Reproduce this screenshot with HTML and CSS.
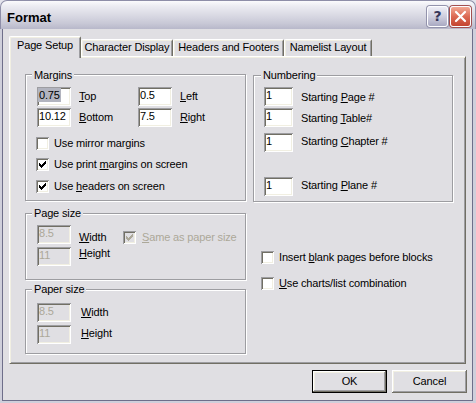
FILE: index.html
```html
<!DOCTYPE html>
<html>
<head>
<meta charset="utf-8">
<title>Format</title>
<link rel="stylesheet" href="styles.css">
</head>
<body>
<div class="window">
  <div class="titlebar">
    <span class="title">Format</span>
    <div class="caption-buttons">
      <span class="cbtn help">?</span>
      <span class="cbtn close"><svg width="13" height="13" viewBox="0 0 13 13"><path d="M2 2L11 11M11 2L2 11" stroke="#fff" stroke-width="2.2" stroke-linecap="round"/></svg></span>
    </div>
  </div>
  <div class="frame">
    <div class="client">
      <div class="tabs">
        <div class="tab active t1">Page Setup</div>
        <div class="tab t2">Character Display</div>
        <div class="tab t3">Headers and Footers</div>
        <div class="tab t4">Namelist Layout</div>
      </div>
      <div class="panel">
        <div class="col">
          <div class="group margins">
            <span class="legend">Margins</span>
            <div class="mgrid">
              <div class="field"><span class="sel">0.75</span></div>
              <div class="flabel"><u>T</u>op</div>
              <div class="field">0.5</div>
              <div class="flabel"><u>L</u>eft</div>
              <div class="field">10.12</div>
              <div class="flabel"><u>B</u>ottom</div>
              <div class="field">7.5</div>
              <div class="flabel"><u>R</u>ight</div>
            </div>
            <div class="check c1"><span class="box"></span><span>Use mirror margins</span></div>
            <div class="check c2"><span class="box"><svg class="tick" width="13" height="13" viewBox="0 0 13 13"><path d="M3.5 5v3M4.5 6v3M5.5 7v3M6.5 6v3M7.5 5v3M8.5 4v3M9.5 3v3" stroke="#000"/></svg></span><span>Use print <u>m</u>argins on screen</span></div>
            <div class="check c3"><span class="box"><svg class="tick" width="13" height="13" viewBox="0 0 13 13"><path d="M3.5 5v3M4.5 6v3M5.5 7v3M6.5 6v3M7.5 5v3M8.5 4v3M9.5 3v3" stroke="#000"/></svg></span><span>Use <u>h</u>eaders on screen</span></div>
          </div>

          <div class="group pagesize">
            <span class="legend">Page size</span>
            <div class="fields">
              <div class="field disabled">8.5</div>
              <div class="field disabled">11</div>
            </div>
            <div class="labels">
              <div><u>W</u>idth</div>
              <div><u>H</u>eight</div>
            </div>
            <div class="check same disabled"><span class="box"><svg class="tick" width="13" height="13" viewBox="0 0 13 13"><path d="M3.5 5v3M4.5 6v3M5.5 7v3M6.5 6v3M7.5 5v3M8.5 4v3M9.5 3v3" stroke="#aca899"/></svg></span><span><u>S</u>ame as paper size</span></div>
          </div>

          <div class="group papersize">
            <span class="legend">Paper size</span>
            <div class="fields">
              <div class="field disabled">8.5</div>
              <div class="field disabled">11</div>
            </div>
            <div class="labels">
              <div><u>W</u>idth</div>
              <div><u>H</u>eight</div>
            </div>
          </div>
        </div>

        <div class="col">
          <div class="group numbering">
            <span class="legend">Numbering</span>
            <div class="nrow n1"><div class="field">1</div><div class="nlabel">Starting <u>P</u>age #</div></div>
            <div class="nrow n2"><div class="field">1</div><div class="nlabel">Starting <u>T</u>able#</div></div>
            <div class="nrow n3"><div class="field">1</div><div class="nlabel">Starting <u>C</u>hapter #</div></div>
            <div class="nrow n4"><div class="field">1</div><div class="nlabel">Starting <u>P</u>lane #</div></div>
          </div>
          <div class="check r1"><span class="box"></span><span>Insert <u>b</u>lank pages before blocks</span></div>
          <div class="check r2"><span class="box"></span><span><u>U</u>se charts/list combination</span></div>
        </div>
      </div>
      <div class="buttons">
        <div class="btn default">OK</div>
        <div class="btn">Cancel</div>
      </div>
    </div>
  </div>
</div>
</body>
</html>
```
FILE: styles.css
```css
* { box-sizing: border-box; }
html, body { margin: 0; padding: 0; }
body {
  width: 476px;
  height: 403px;
  overflow: hidden;
  background: #e4e4ec;
  font-family: "Liberation Sans", Arial, sans-serif;
  font-size: 11px;
  letter-spacing: -0.15px;
  color: #000;
}
u { text-decoration: underline; text-underline-offset: 1px; }

.window {
  width: 476px;
  height: 403px;
  display: flex;
  flex-direction: column;
}

/* Title bar */
.titlebar {
  height: 29px;
  flex: none;
  display: flex;
  align-items: center;
  justify-content: space-between;
  padding: 0 4px 0 6px;
  border: 1px solid #8e8ea8;
  border-bottom: 0;
  border-radius: 7px 7px 0 0;
  background: linear-gradient(#fbfbfd 0%, #ececf2 18%, #dadae4 50%, #c8c8d6 80%, #b8b8ca 100%);
}
.title {
  font-weight: bold;
  font-size: 13px;
  letter-spacing: 0;
  padding-top: 4px;
}
.caption-buttons { display: flex; gap: 2px; margin-top: 2px; }
.cbtn {
  width: 21px;
  height: 21px;
  border-radius: 3px;
  display: flex;
  align-items: center;
  justify-content: center;
  border: 1px solid #fdfdff;
}
.help {
  background: linear-gradient(#eeeef6, #cbcbdc 55%, #a9a9c2);
  box-shadow: 0 0 0 1px #9393ac;
  font: bold 14px "DejaVu Sans", sans-serif;
  color: #36365a;
  letter-spacing: 0;
}
.close {
  background: linear-gradient(#f2a894, #dc6a54 50%, #c44430);
  box-shadow: 0 0 0 1px #a25050;
}

/* Frame and client area */
.frame {
  flex: 1;
  display: flex;
  padding: 0 3px 2px 2px;
  background: #cfcfdb;
}
.client {
  flex: 1;
  border: 1px solid #6e6e8a;
  border-top: 0;
  background: #e0dfe3;
}

/* Tabs */
.tabs {
  height: 27px;
  display: flex;
  align-items: flex-end;
  padding-left: 6px;
  position: relative;
  z-index: 1;
}
.tab {
  height: 17px;
  border: 1px solid;
  border-color: #fff #716f64 transparent #fff;
  border-bottom: 0;
  border-radius: 2px 2px 0 0;
  box-shadow: inset 1px 1px #f1efe2, inset -1px 0 #9d9da1;
  background: #e0dfe3;
  text-align: center;
  line-height: 13px;
  padding-top: 1px;
  white-space: nowrap;
}
.tab.active {
  height: 22px;
  margin-bottom: -2px;
  padding-top: 2px;
}
.t1 { width: 72px; }
.t2 { width: 92px; }
.t3 { width: 111px; }
.t4 { width: 88px; }

/* Panel */
.panel {
  width: 457px;
  height: 308px;
  margin-left: 6px;
  border: 1px solid;
  border-color: #fff #716f64 #716f64 #fff;
  box-shadow: inset 1px 1px #f1efe2, inset -1px -1px #9d9da1;
  padding: 17px 0 0 15px;
  display: grid;
  grid-template-columns: 221px 200px;
  column-gap: 7px;
  align-items: start;
}
.col { display: flex; flex-direction: column; }

/* Group boxes */
.group {
  position: relative;
  border: 1px solid #9d9da1;
  box-shadow: inset 1px 1px #fff, 1px 1px #fff;
}
.legend {
  position: absolute;
  top: -6px;
  left: 6px;
  padding: 0 2px;
  line-height: 13px;
  background: #e0dfe3;
  white-space: nowrap;
}

/* Edit fields */
.field {
  width: 34px;
  height: 19px;
  background: #fff;
  box-shadow: inset 1px 1px #9d9da1, inset -1px -1px #fff, inset 2px 2px #716f64, inset -2px -2px #f1efe2;
  padding: 2px 0 0 2px;
  line-height: 13px;
  white-space: nowrap;
  overflow: hidden;
}
.field.disabled { background: #e0dfe3; color: #aca899; }
.sel {
  display: inline-block;
  background: #b2b4bf;
  padding: 1px 1px 0 1px;
  margin: -1px 0 0 -1px;
}

/* Checkboxes */
.check {
  display: flex;
  align-items: flex-start;
  gap: 5px;
  line-height: 13px;
  white-space: nowrap;
}
.box {
  width: 13px;
  height: 13px;
  flex: none;
  background: #fff;
  box-shadow: inset 1px 1px #9d9da1, inset -1px -1px #fff, inset 2px 2px #716f64, inset -2px -2px #f1efe2;
}
.tick { display: block; shape-rendering: crispEdges; }
.check.disabled { color: #aca899; gap: 6px; }
.check.disabled .box { background: #e0dfe3; }

/* Margins group */
.margins {
  height: 127px;
  padding: 12px 0 0 11px;
}
.mgrid {
  display: grid;
  grid-template-columns: 34px 67px 34px auto;
  row-gap: 2px;
}
.flabel { padding: 3px 0 0 8px; line-height: 13px; }
.margins .check { margin-left: -1px; }
.c1 { margin-top: 10px; }
.c2 { margin-top: 8px; }
.c3 { margin-top: 9px; }

/* Page size / paper size */
.pagesize {
  margin-top: 12px;
  height: 67px;
  padding: 11px 0 0 11px;
  display: flex;
  align-items: flex-start;
}
.fields { display: flex; flex-direction: column; gap: 3px; }
.labels {
  margin-left: 8px;
  width: 36px;
  padding-top: 4px;
  line-height: 16px;
}
.check.same { margin: 6px 0 0 8px; }
.papersize {
  margin-top: 9px;
  height: 65px;
  padding: 13px 0 0 11px;
  display: flex;
  align-items: flex-start;
}
.papersize .labels {
  margin-left: 10px;
  padding-top: 3px;
  line-height: 13px;
  display: flex;
  flex-direction: column;
  gap: 8px;
}
.pagesize .legend, .papersize .legend { top: -7px; }

/* Numbering */
.numbering {
  margin-top: 1px;
  height: 127px;
  padding: 11px 0 0 10px;
}
.numbering .legend { top: -7px; left: 7px; }
.nrow { display: flex; align-items: flex-start; }
.nrow .field { width: 29px; }
.nlabel { margin-left: 8px; padding-top: 4px; line-height: 13px; white-space: nowrap; }
.n2 { margin-top: 2px; }
.n3 { margin-top: 6px; }
.n4 { margin-top: 25px; }
.n3 .nlabel, .n4 .nlabel { padding-top: 2px; }

.r1 { margin: 49px 0 0 8px; }
.r2 { margin: 13px 0 0 8px; }

/* Buttons */
.buttons {
  display: flex;
  justify-content: flex-end;
  gap: 5px;
  margin-top: 6px;
  padding-right: 5px;
}
.btn {
  width: 75px;
  height: 23px;
  background: #e0dfe3;
  text-align: center;
  line-height: 23px;
  box-shadow: inset -1px -1px #716f64, inset 1px 1px #fff, inset -2px -2px #9d9da1, inset 2px 2px #f1efe2;
}
.btn.default {
  border: 1px solid #000;
  line-height: 21px;
}
```
